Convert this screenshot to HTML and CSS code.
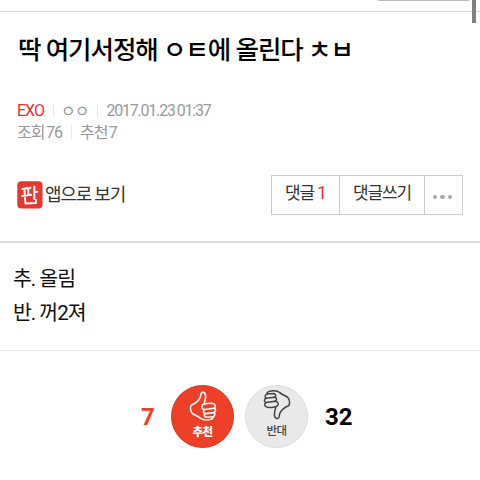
FILE: index.html
```html
<!DOCTYPE html>
<html lang="ko">
<head>
    <meta charset="UTF-8">
    <meta name="viewport" content="width=device-width, initial-scale=1.0">
    <title>딱 여기서정해 ㅇㅌ에 올린다 ㅊㅂ</title>
    <link rel="stylesheet" href="styles.css">
</head>
<body>

<div class="topbar">
    <div class="topbar-box"></div>
</div>
<div class="scrollbar"></div>

<!-- 글 제목 -->
<div class="head">
    <h1>딱 여기서정해 ㅇㅌ에 올린다 ㅊㅂ</h1>
    <div class="meta">
        <span class="channel">EXO</span><i class="bar"></i><span class="writer">ㅇㅇ</span><i class="bar"></i><span class="date">2017.01.23 01:37</span>
    </div>
    <div class="meta">
        <span class="views">조회 76</span><i class="bar"></i><span class="likes">추천 7</span>
    </div>

    <div class="tools">
        <a class="app">
            <svg class="app-icon" width="26" height="28" viewBox="0 0 26 28">
                <rect x="0.3" y="0.3" width="25.2" height="27.2" rx="4" fill="#e5382f"/>
                <g fill="none" stroke="#fff" stroke-width="2" stroke-linejoin="round" stroke-linecap="round">
                    <path d="M5.500 8l8-1.200M7.500 8l.3 6.500M11.300 7.500v6.500M5.200 15l9-1.200M17.300 5.500v12.500M17.300 11l3-.3M8 17l.5 5.500 10.500-.6v-3"/>
                </g>
            </svg>
            <span class="app-text">앱으로 보기</span>
        </a>
        <div class="buttons">
            <a class="btn reply">댓글 <em>1</em></a>
            <a class="btn write">댓글쓰기</a>
            <a class="btn more"><i></i><i></i><i></i></a>
        </div>
    </div>
</div>

<!-- 본문 -->
<div class="content">
    <p>추. 올림</p>
    <p>반. 꺼2져</p>
</div>

<!-- 추천 / 반대 -->
<div class="vote">
    <span class="count up-count">7</span>
    <a class="circle up">
        <svg width="28" height="30" viewBox="0 0 28 30" fill="none" stroke="#fff" stroke-width="1.6" stroke-linejoin="round" stroke-linecap="round">
            <path d="M11 27C9 24.500 5 24.500 3 22C1 19.500 1 15.500 2.500 14C5.500 13 10.500 9.500 11.500 5.500C11.600 2.500 12.500 1.200 14.200 1.300C17.500 2 17 7 15.200 12.600"/>
            <path d="M13.500 14C15 12.500 20.500 12 23.500 12.500C27 13.200 27 16.300 24.800 17.200L16 18.500C13 18.500 12 15.500 13.500 14"/>
            <path d="M25 17.200C27.300 18.200 27 20.900 24.800 21.600L16.500 22.600C13.800 22.200 13.800 19 16 18.500"/>
            <path d="M24.900 21.600C26.500 22.800 26 25 24 25.700L17.300 26.300C15 25.800 14.500 23.300 16.500 22.600"/>
            <path d="M24 25.700C24.200 27.600 22.500 28.500 20 28.800C16 29.200 13 28.800 11 27"/>
        </svg>
        <span>추천</span>
    </a>
    <a class="circle down">
        <svg width="28" height="30" viewBox="0 0 28 30" fill="none" stroke="#444" stroke-width="1.5" stroke-linejoin="round" stroke-linecap="round">
            <path d="M17 2.800C19 5.300 23 5.300 25 7.800C27 10.300 27 14.300 25.500 15.800C22.500 16.800 17.500 20.300 16.500 24.300C16.400 27.300 15.500 28.600 13.800 28.500C10.500 27.800 11 22.800 12.800 17.200"/>
            <path d="M14.500 15.800C13 17.300 7.500 17.800 4.500 17.300C1 16.600 1 13.500 3.200 12.600L12 11.300C15 11.300 16 14.300 14.500 15.800"/>
            <path d="M3 12.600C.700 11.600 1 8.900 3.200 8.200L11.500 7.200C14.200 7.600 14.200 10.800 12 11.300"/>
            <path d="M3.100 8.200C1.500 7 2 4.800 4 4.100L10.700 3.500C13 4 13.500 6.500 11.500 7.200"/>
            <path d="M4 4.100C3.800 2.200 5.500 1.300 8 1C12 .600 15 1 17 2.800"/>
        </svg>
        <span>반대</span>
    </a>
    <span class="count down-count">32</span>
</div>

</body>
</html>
```

FILE: styles.css
```css
* {
    box-sizing: border-box;
}
body {
    margin: 0;
    height: 480px;
    overflow: hidden;
    background-color: #fff;
    color: #111;
    font-family: Roboto, "Noto Sans CJK KR", sans-serif;
}
h1, p {
    margin: 0;
}
i, em {
    font-style: normal;
}
.topbar {
    height: 12px;
    border-bottom: 1px solid #d6d6d6;
}
.topbar-box {
    width: 91px;
    height: 1px;
    margin-left: 378px;
    background-color: #bbb;
}
.scrollbar {
    position: absolute;
    top: 0;
    right: 4px;
    width: 4px;
    height: 23px;
    background-color: #808080;
}
.head {
    height: 231px;
    padding: 20px 17px 0;
    border-bottom: 2px solid #dcdcdc;
}
h1 {
    height: 68px;
    padding-left: 1px;
    line-height: 37px;
    font-size: 25.5px;
    font-weight: 500;
    letter-spacing: -1.05px;
    color: #000;
    white-space: nowrap;
}
.meta {
    display: flex;
    align-items: center;
    height: 21px;
    font-size: 16px;
    letter-spacing: -1px;
    word-spacing: -1.5px;
    color: #999;
    white-space: nowrap;
}
.meta .bar {
    width: 1px;
    height: 14px;
    margin: 0 8px 0 9px;
    background-color: #e8e8e8;
}
.meta .channel {
    color: #ee2c32;
}
.meta .writer {
    margin: 0 0 2px -1px;
}
.meta .date {
    letter-spacing: -1.2px;
    word-spacing: -0.8px;
}
.meta .views,
.meta .likes {
    margin-bottom: 2px;
}
.tools {
    display: flex;
    justify-content: space-between;
    margin-top: 33px;
}
.app {
    display: flex;
    align-items: center;
    height: 40px;
    color: #333;
    font-size: 18px;
    letter-spacing: -1.2px;
}
.app-text {
    margin-left: 2px;
    margin-bottom: 5px;
}
.buttons {
    display: flex;
    width: 192px;
    height: 40px;
    border: 1px solid #ccc;
}
.btn {
    display: flex;
    justify-content: center;
    line-height: 34px;
    font-size: 17px;
    letter-spacing: -1.1px;
    color: #333;
    white-space: pre;
}
.btn + .btn {
    border-left: 1px solid #ccc;
}
.btn em {
    color: #ee2c32;
    font-size: 18px;
}
.reply {
    width: 67px;
}
.write {
    width: 85px;
}
.more {
    flex: 1;
    align-items: center;
    gap: 3px;
    padding: 4px 2px 0 0;
}
.more i {
    width: 4.5px;
    height: 4.5px;
    border-radius: 50%;
    background-color: #aaa;
}
.content {
    height: 108px;
    padding: 20px 13px 0;
    border-bottom: 1px solid #e8e8e8;
    font-size: 20.5px;
    line-height: 33.5px;
    letter-spacing: -1px;
}
.vote {
    display: flex;
    align-items: center;
    height: 130px;
    padding-left: 141px;
}
.count {
    padding-top: 2px;
    font-size: 24px;
    font-weight: 700;
}
.up-count {
    width: 30px;
    color: #ee3f28;
}
.down-count {
    margin-left: 17px;
    color: #000;
}
.circle {
    display: flex;
    flex-direction: column;
    align-items: center;
    width: 63px;
    height: 63px;
    padding-top: 5px;
    border-radius: 50%;
    font-size: 11.5px;
    line-height: 16px;
    letter-spacing: -0.5px;
}
.circle svg {
    flex: none;
}
.circle span {
    margin-top: 3px;
}
.up {
    background-color: #ee3f28;
    border: 1px solid #d93a25;
    color: #fff;
    font-weight: 900;
}
.down {
    margin-left: 11px;
    padding-top: 4px;
    background-color: #e9e9e9;
    border: 1px solid #dcdcdc;
    color: #444;
    font-weight: 500;
}
```
